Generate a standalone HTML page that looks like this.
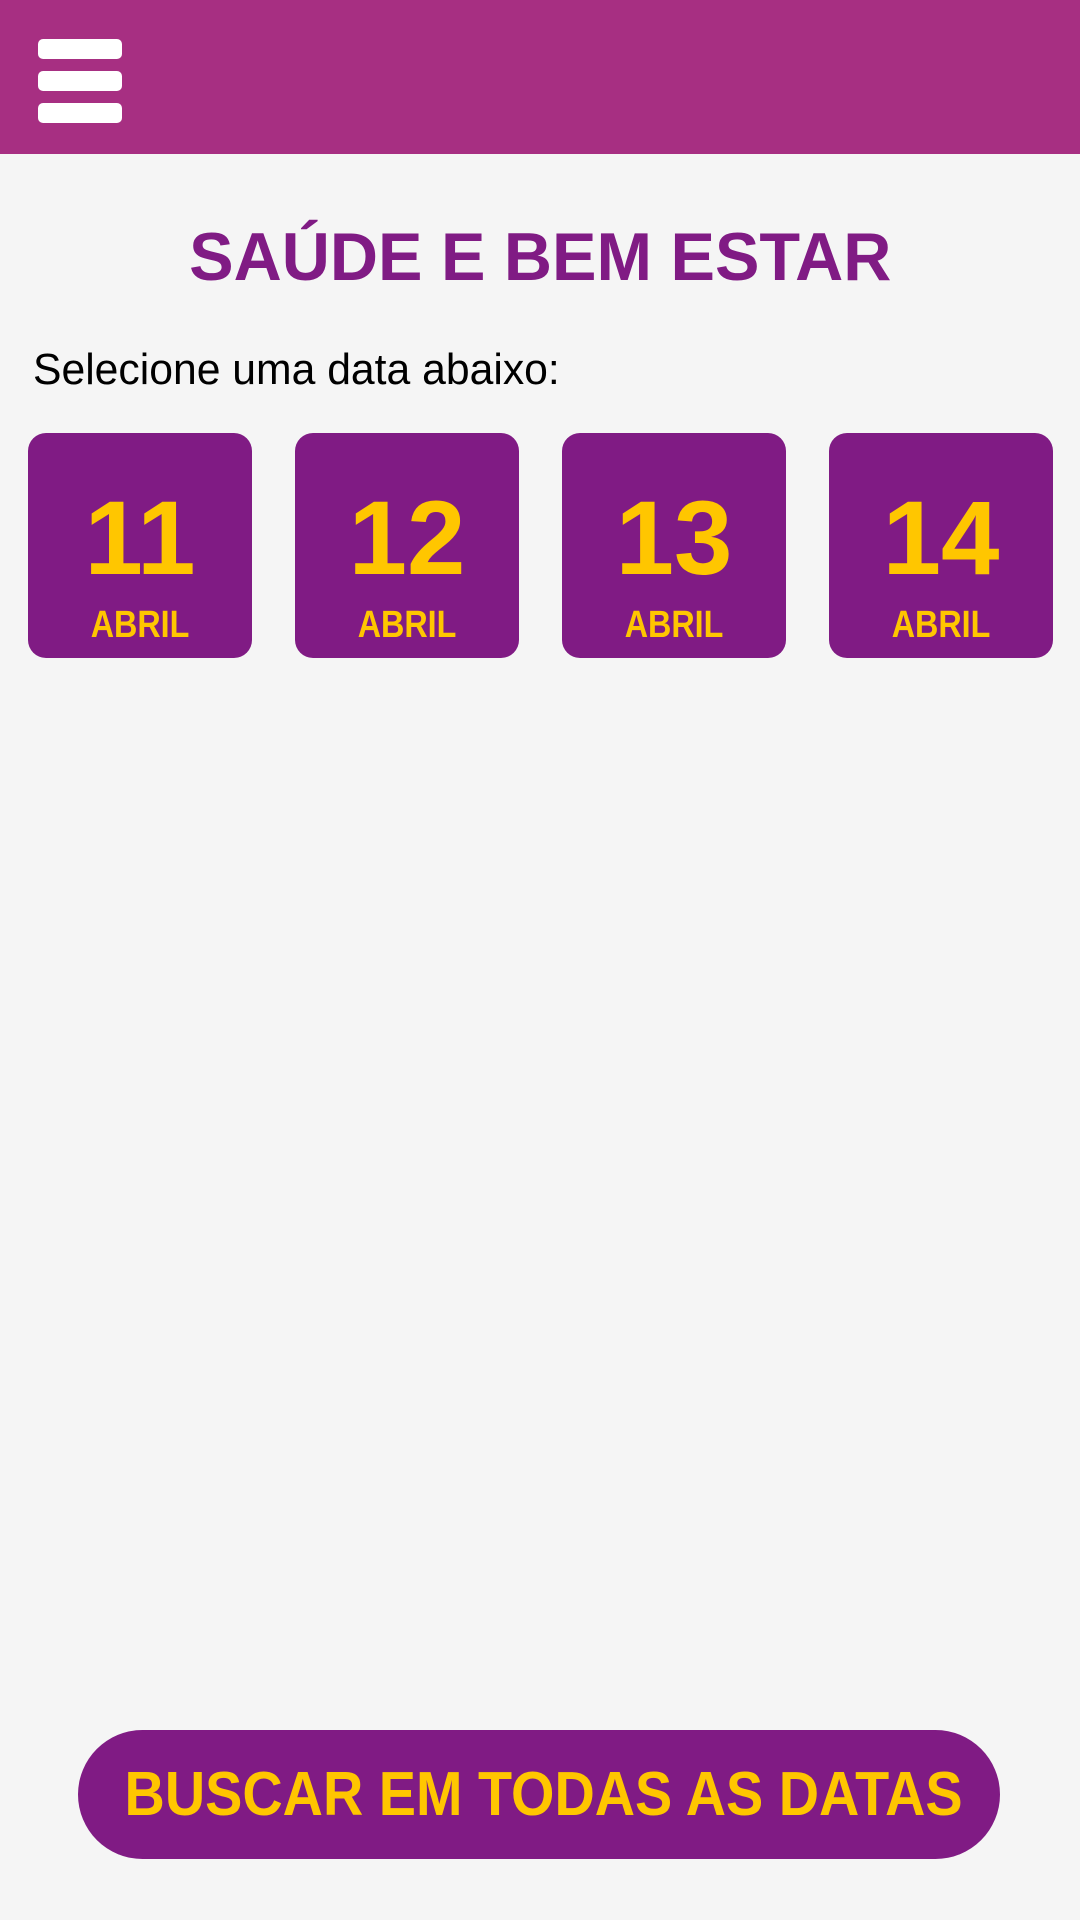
<!DOCTYPE html>
<html><head><meta charset="utf-8"><style>
html,body{margin:0;padding:0}
body{width:1080px;height:1920px;background:#f5f5f5;position:relative;overflow:hidden;font-family:"Liberation Sans",sans-serif}
.hdr{position:absolute;left:0;top:0;width:1080px;height:154px;background:#a72f82}
.bar{position:absolute;left:38px;width:84px;height:20px;background:#fff;border-radius:5px}
.title{position:absolute;left:0;width:1080px;top:214px;text-align:center;color:#801b84;font-weight:bold;font-size:68px;line-height:86px;white-space:nowrap}
.title span{display:inline-block;transform:scaleX(0.98)}
.btn span{display:inline-block;transform:scaleX(0.9)}
.sub{position:absolute;left:33px;top:342px;font-size:44px;line-height:56px;color:#000;transform:scaleX(0.97);transform-origin:left}
.box{position:absolute;top:433px;width:224px;height:225px;background:#801b84;border-radius:18px;color:#ffc600;text-align:center;font-weight:bold}
.box .n{position:absolute;left:0;width:100%;top:48px;font-size:105px;line-height:116px}
.box .m{position:absolute;left:0;width:100%;top:170px;font-size:38px;line-height:44px}
.box .m span{display:inline-block;transform:scaleX(0.85)}
.btn{position:absolute;left:78px;top:1730px;width:922px;height:129px;border-radius:65px;background:#801b84;color:#ffc600;font-weight:bold;font-size:62px;line-height:129px;text-align:center;white-space:nowrap}
</style></head><body>
<div class="hdr">
<div class="bar" style="top:39px"></div>
<div class="bar" style="top:71px"></div>
<div class="bar" style="top:103px"></div>
</div>
<div class="title"><span>SAÚDE E BEM ESTAR</span></div>
<div class="sub">Selecione uma data abaixo:</div>
<div class="box" style="left:28px"><div class="n">11</div><div class="m"><span>ABRIL</span></div></div>
<div class="box" style="left:295px"><div class="n">12</div><div class="m"><span>ABRIL</span></div></div>
<div class="box" style="left:562px"><div class="n">13</div><div class="m"><span>ABRIL</span></div></div>
<div class="box" style="left:829px"><div class="n">14</div><div class="m"><span>ABRIL</span></div></div>
<div class="btn"><span>BUSCAR EM TODAS AS DATAS</span></div>
</body></html>
